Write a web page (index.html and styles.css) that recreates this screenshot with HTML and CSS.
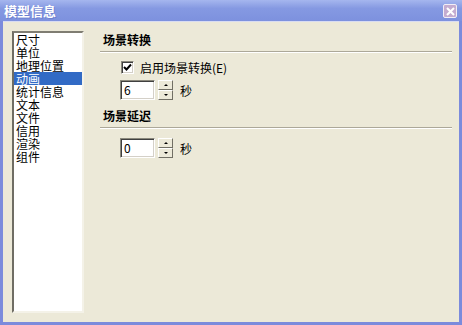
FILE: index.html
```html
<!DOCTYPE html>
<html lang="zh-CN">

<head>
    <meta charset="UTF-8">
    <title>模型信息</title>
    <link rel="stylesheet" href="styles.css">
</head>

<body>
    <div class="window">
        <div class="titlebar">
            <span class="title">模型信息</span>
            <span class="close">
                <svg width="9" height="9" viewBox="0 0 9 9">
                    <path d="M1 1 L8 8 M8 1 L1 8" stroke="#fff" stroke-width="2" />
                </svg>
            </span>
        </div>
        <div class="content">
            <ul class="listbox">
                <li>尺寸</li>
                <li>单位</li>
                <li>地理位置</li>
                <li class="selected">动画</li>
                <li>统计信息</li>
                <li>文本</li>
                <li>文件</li>
                <li>信用</li>
                <li>渲染</li>
                <li>组件</li>
            </ul>
            <div class="panel">
                <div class="group-title">场景转换</div>
                <div class="separator"></div>
                <label class="check-row">
                    <span class="checkbox">
                        <svg width="9" height="9" viewBox="0 0 9 9">
                            <path d="M1 4 L3.5 6.5 L8 1.5" stroke="#000" stroke-width="2" fill="none" />
                        </svg>
                    </span>
                    启用场景转换(E)
                </label>
                <div class="spin-row">
                    <span class="edit">6</span>
                    <span class="spin">
                        <span class="spin-btn"><span class="arrow-up"></span></span>
                        <span class="spin-btn"><span class="arrow-down"></span></span>
                    </span>
                    <span class="unit">秒</span>
                </div>
                <div class="group-title second">场景延迟</div>
                <div class="separator"></div>
                <div class="spin-row second">
                    <span class="edit">0</span>
                    <span class="spin">
                        <span class="spin-btn"><span class="arrow-up"></span></span>
                        <span class="spin-btn"><span class="arrow-down"></span></span>
                    </span>
                    <span class="unit">秒</span>
                </div>
            </div>
        </div>
    </div>
</body>

</html>
```

FILE: styles.css
```css
body {
    margin: 0;
    padding: 0;
    font-family: "Noto Sans CJK SC", "Liberation Sans", sans-serif;
    font-size: 12px;
    color: #000;
}

.window {
    width: 462px;
    height: 325px;
    box-sizing: border-box;
    background-color: #ece9d8;
    border: 3px solid #7b8bdc;
    border-top: none;
    display: flex;
    flex-direction: column;
}

.titlebar {
    height: 21px;
    margin: 0 -3px;
    padding: 0 5px 0 4px;
    background: linear-gradient(to bottom, #a5b6ee 0%, #8599e2 40%, #7d91de 100%);
    display: flex;
    align-items: center;
    justify-content: space-between;
}

.title {
    color: #fff;
    font-weight: bold;
    font-size: 13px;
    line-height: 21px;
    text-shadow: 1px 1px 0 #6d7fcf;
}

.close {
    width: 12px;
    height: 12px;
    border: 1px solid #f2eef6;
    border-radius: 2px;
    background-color: #c4acd0;
    display: flex;
    align-items: center;
    justify-content: center;
    margin-top: 1px;
}

.content {
    flex: 1;
    display: flex;
    padding: 9px 7px 9px 9px;
    border-top: 1px solid #d8dcf2;
}

.listbox {
    list-style: none;
    margin: 0;
    padding: 0;
    width: 72px;
    box-sizing: border-box;
    background-color: #fff;
    border-top: 2px solid #7f7d72;
    border-left: 2px solid #6f6d64;
    border-right: 2px solid #f4f2e8;
    border-bottom: 2px solid #f4f2e8;
}

.listbox li {
    height: 13px;
    line-height: 13px;
    padding-left: 2px;
    white-space: nowrap;
}

.listbox li.selected {
    background-color: #316ac5;
    color: #fff;
}

.panel {
    flex: 1;
    margin-left: 16px;
    display: flex;
    flex-direction: column;
}

.group-title {
    font-weight: bold;
    line-height: 14px;
    padding-left: 3px;
    margin-top: 2px;
}

.group-title.second {
    margin-top: 9px;
}

.separator {
    margin-top: 4px;
    border-top: 1px solid #aca899;
    border-bottom: 1px solid #fff;
}

.check-row {
    display: flex;
    align-items: center;
    margin: 8px 0 0 21px;
    height: 13px;
    line-height: 13px;
}

.checkbox {
    width: 9px;
    height: 9px;
    margin-right: 6px;
    background-color: #fff;
    border-top: 1px solid #8a887c;
    border-left: 1px solid #8a887c;
    border-right: 1px solid #fff;
    border-bottom: 1px solid #fff;
    box-shadow: inset 1px 1px 0 #404040, inset -1px -1px 0 #d4d0c8;
    padding: 1px;
    display: flex;
    align-items: center;
    justify-content: center;
}

.spin-row {
    display: flex;
    align-items: center;
    margin: 6px 0 0 20px;
    height: 20px;
}

.spin-row.second {
    margin-top: 9px;
}

.edit {
    width: 35px;
    height: 20px;
    box-sizing: border-box;
    background-color: #fff;
    border-top: 1px solid #8a887c;
    border-left: 1px solid #8a887c;
    border-right: 1px solid #fff;
    border-bottom: 1px solid #fff;
    box-shadow: inset 1px 1px 0 #404040, inset -1px -1px 0 #d4d0c8;
    padding-left: 3px;
    line-height: 17px;
}

.spin {
    margin-left: 3px;
    width: 15px;
    height: 20px;
    display: flex;
    flex-direction: column;
}

.spin-btn {
    flex: 1;
    box-sizing: border-box;
    background-color: #ece9d8;
    border-top: 1px solid #fff;
    border-left: 1px solid #fff;
    border-right: 1px solid #716f64;
    border-bottom: 1px solid #716f64;
    display: flex;
    align-items: center;
    justify-content: center;
}

.arrow-up {
    width: 0;
    height: 0;
    border-left: 2px solid transparent;
    border-right: 2px solid transparent;
    border-bottom: 2px solid #000;
}

.arrow-down {
    width: 0;
    height: 0;
    border-left: 2px solid transparent;
    border-right: 2px solid transparent;
    border-top: 2px solid #000;
}

.unit {
    margin-left: 7px;
}
```
